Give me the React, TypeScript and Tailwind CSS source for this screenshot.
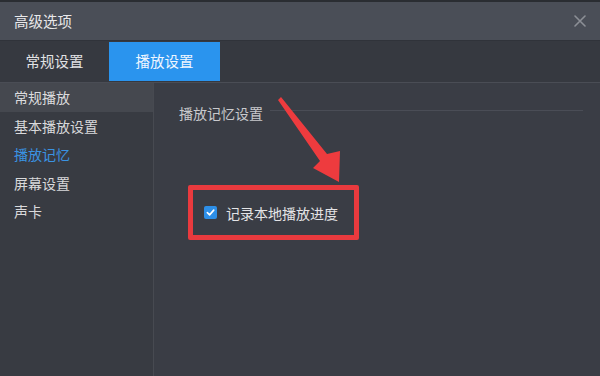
import { useState } from "react";

const sideItems = ["常规播放", "基本播放设置", "播放记忆", "屏幕设置", "声卡"];

export default function App() {
  const [checked, setChecked] = useState(true);

  return (
    <div
      className="relative w-[600px] h-[376px] flex flex-col overflow-hidden bg-[#3a3d45] text-[14px] leading-none"
      style={{ fontFamily: '"Noto Sans CJK SC", "Noto Sans", sans-serif' }}
    >
      <div className="h-[2px] bg-[#2a2d32]" />

      {/* title bar */}
      <div className="h-[39px] flex items-center justify-between pl-[14px] pr-[14px] bg-[#4a4e57] border-b border-[#30333a]">
        <span className="text-[14.5px] text-[#e8e8ea]">高级选项</span>
        <svg width="12" height="12" viewBox="0 0 12 12" className="text-[#8c8f96]">
          <path d="M1 1L11 11M11 1L1 11" stroke="currentColor" strokeWidth="1.6" strokeLinecap="round" />
        </svg>
      </div>

      {/* tabs */}
      <div className="h-[41px] flex items-end bg-[#363940] pb-[1px]">
        <div className="w-[109px] h-[39px] flex items-center justify-center text-[14.5px] text-[#e2e2e4]">
          常规设置
        </div>
        <div className="w-[111px] h-[39px] flex items-center justify-center text-[14.5px] text-[#eef6ff] bg-[#2a94ee]">
          播放设置
        </div>
      </div>

      {/* body */}
      <div className="flex-1 flex border-t border-[#4a4d55]">
        <div className="w-[154px] bg-[#383b42] border-r border-[#474a51]">
          {sideItems.map((item, i) => (
            <div
              key={item}
              className={
                "h-[28.5px] flex items-center pl-[14px] " +
                (i === 0 ? "bg-[#45484f] text-[#dcdcde] " : "") +
                (i === 2 ? "text-[#3a93e2]" : i === 0 ? "" : "text-[#d9d9db]")
              }
            >
              {item}
            </div>
          ))}
        </div>

        <div className="flex-1 bg-[#3a3d45] pl-[25px] pt-[21px]">
          <div className="flex items-center h-[18px]">
            <span className="text-[#c9cacd]">播放记忆设置</span>
            <div className="flex-1 h-px bg-[#4a4d56] ml-[7px] mr-[17px] -mt-[5px]" />
          </div>

          <div className="mt-[63px] ml-[9px] w-[171px] h-[55px] border-[5px] border-[#e93a3e] rounded-[2px] flex items-center pl-[11px]">
            <button
              onClick={() => setChecked(!checked)}
              className="w-[13px] h-[13px] rounded-[2px] bg-[#2d8fe8] flex items-center justify-center -mt-[1px]"
            >
              {checked && (
                <svg width="9" height="9" viewBox="0 0 10 10">
                  <path d="M1.5 5.2L4 7.6L8.6 2.4" fill="none" stroke="#fff" strokeWidth="1.8" strokeLinecap="round" strokeLinejoin="round" />
                </svg>
              )}
            </button>
            <span className="ml-[9px] text-[#e4e4e6]">记录本地播放进度</span>
          </div>
        </div>
      </div>

      {/* red annotation arrow */}
      <svg className="absolute inset-0 pointer-events-none" width="600" height="376" viewBox="0 0 600 376">
        <polygon
          points="278,100 281,97 327,154 340,151 339,182 313,168 320,161"
          fill="#ee3b3e"
        />
      </svg>
    </div>
  );
}
